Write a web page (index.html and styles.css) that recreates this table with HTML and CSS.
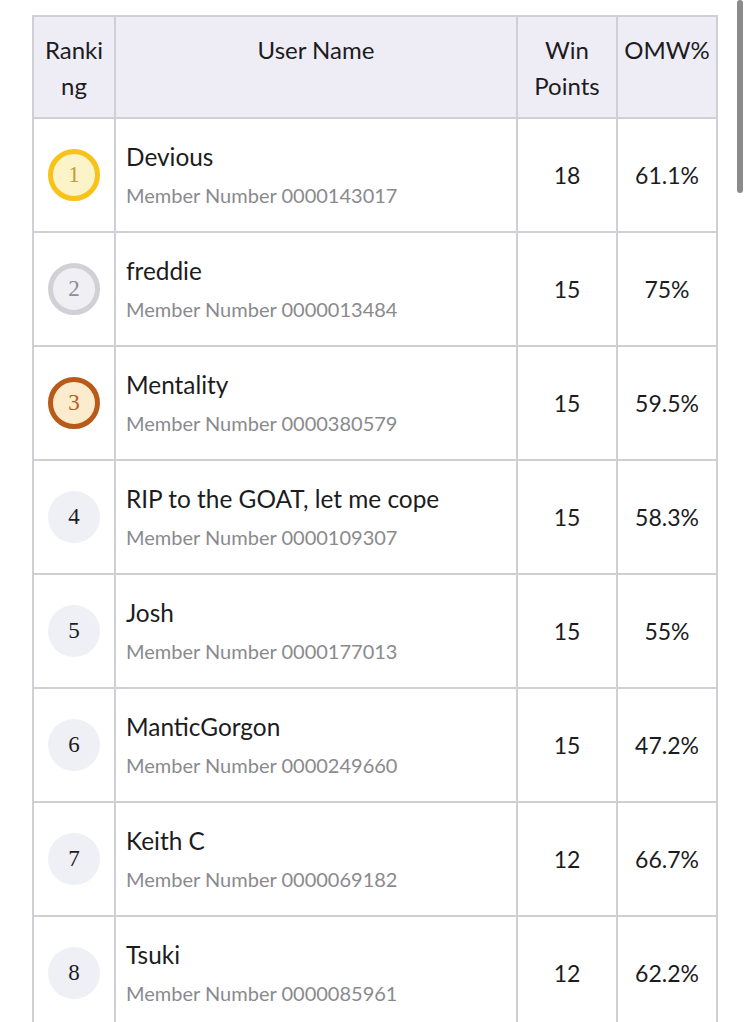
FILE: index.html
```html
<!DOCTYPE html>
<html>
<head>
<meta charset="utf-8">
<link rel="stylesheet" href="styles.css">
</head>
<body>
<div class="page">
  <table class="standings">
    <colgroup>
      <col class="c-rank"><col class="c-name"><col class="c-win"><col class="c-omw">
    </colgroup>
    <thead>
      <tr>
        <th class="h-rank">Ranking</th>
        <th>User Name</th>
        <th>Win Points</th>
        <th>OMW%</th>
      </tr>
    </thead>
    <tbody>
      <tr>
        <td class="rank"><span class="badge gold">1</span></td>
        <td class="user"><div class="name">Devious</div><div class="member">Member Number 0000143017</div></td>
        <td class="num">18</td><td class="num">61.1%</td>
      </tr>
      <tr>
        <td class="rank"><span class="badge silver">2</span></td>
        <td class="user"><div class="name">freddie</div><div class="member">Member Number 0000013484</div></td>
        <td class="num">15</td><td class="num">75%</td>
      </tr>
      <tr>
        <td class="rank"><span class="badge bronze">3</span></td>
        <td class="user"><div class="name">Mentality</div><div class="member">Member Number 0000380579</div></td>
        <td class="num">15</td><td class="num">59.5%</td>
      </tr>
      <tr>
        <td class="rank"><span class="badge">4</span></td>
        <td class="user"><div class="name">RIP to the GOAT, let me cope</div><div class="member">Member Number 0000109307</div></td>
        <td class="num">15</td><td class="num">58.3%</td>
      </tr>
      <tr>
        <td class="rank"><span class="badge">5</span></td>
        <td class="user"><div class="name">Josh</div><div class="member">Member Number 0000177013</div></td>
        <td class="num">15</td><td class="num">55%</td>
      </tr>
      <tr>
        <td class="rank"><span class="badge">6</span></td>
        <td class="user"><div class="name">ManticGorgon</div><div class="member">Member Number 0000249660</div></td>
        <td class="num">15</td><td class="num">47.2%</td>
      </tr>
      <tr>
        <td class="rank"><span class="badge">7</span></td>
        <td class="user"><div class="name">Keith C</div><div class="member">Member Number 0000069182</div></td>
        <td class="num">12</td><td class="num">66.7%</td>
      </tr>
      <tr>
        <td class="rank"><span class="badge">8</span></td>
        <td class="user"><div class="name">Tsuki</div><div class="member">Member Number 0000085961</div></td>
        <td class="num">12</td><td class="num">62.2%</td>
      </tr>
    </tbody>
  </table>
</div>
<div class="scrollbar"></div>
</body>
</html>
```
FILE: styles.css
```css
html, body {
  margin: 0;
  padding: 0;
  background: #ffffff;
  overflow: hidden;
}
body {
  font-family: Lato, "Noto Sans", sans-serif;
  color: #1c1c1e;
}
.page {
  padding: 15px 0 0 32px;
}
.standings {
  border-collapse: collapse;
  width: 686px;
  table-layout: fixed;
}
.c-rank { width: 82px; }
.c-name { width: 402px; }
.c-win { width: 100px; }
.c-omw { width: 100px; }
.standings th,
.standings td {
  border: 2px solid #cfcfd6;
}
.standings th {
  background: #eeedf6;
  font-weight: 400;
  font-size: 24px;
  line-height: 36px;
  height: 85px;
  vertical-align: top;
  padding: 15px 6px 0;
  text-align: center;
  overflow-wrap: anywhere;
}
.standings td {
  height: 112px;
  padding: 0;
  vertical-align: middle;
}
.rank { text-align: center; }
.badge {
  display: inline-flex;
  align-items: center;
  justify-content: center;
  box-sizing: border-box;
  width: 52px;
  height: 52px;
  border-radius: 50%;
  background: #efeff6;
  font-family: "Liberation Serif", serif;
  font-size: 23px;
  color: #1c1c1e;
  vertical-align: middle;
}
.badge.gold {
  background: #fdf3c9;
  border: 5px solid #f7c21a;
  color: #c99a3a;
}
.badge.silver {
  background: #efeff4;
  border: 5px solid #d0d0d6;
  color: #8e8e93;
}
.badge.bronze {
  background: #fbeccd;
  border: 5px solid #b95a1b;
  color: #b95a1b;
}
.user {
  padding: 0 10px !important;
}
.name {
  font-size: 24.4px;
  line-height: 32px;
  color: #1c1c1e;
}
.member {
  margin-top: 8px;
  font-size: 20px;
  line-height: 28px;
  color: #8a8a8e;
}
.num {
  text-align: center;
  font-size: 23px;
}
.scrollbar {
  position: fixed;
  top: 0;
  left: 737px;
  width: 6px;
  height: 193px;
  border-radius: 3px;
  background: #8b8b8b;
}
```
